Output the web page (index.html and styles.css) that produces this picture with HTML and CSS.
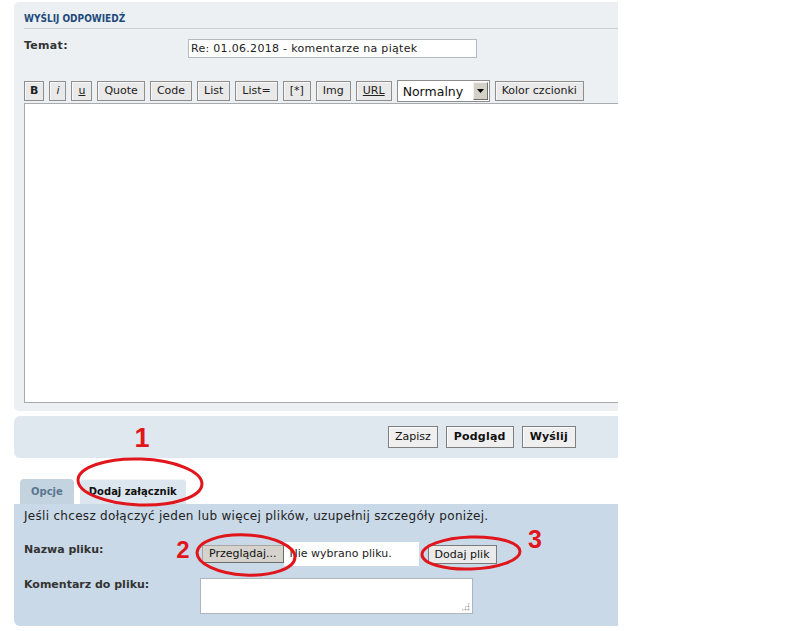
FILE: index.html
```html
<!DOCTYPE html>
<html lang="pl">
<head>
<meta charset="utf-8">
<title>Wyślij odpowiedź</title>
<link rel="stylesheet" href="styles.css">
</head>
<body>
<div class="page">
  <div class="main">
    <section class="panel post">
      <h3 class="post-title">WYŚLIJ ODPOWIEDŹ</h3>
      <div class="subject">
        <div class="subject-label">Temat:</div>
        <div class="subject-input">Re: 01.06.2018 - komentarze na piątek</div>
      </div>
      <div class="toolbar">
        <span class="tb-btn tb-b">B</span>
        <span class="tb-btn tb-i">i</span>
        <span class="tb-btn tb-u">u</span>
        <span class="tb-btn">Quote</span>
        <span class="tb-btn">Code</span>
        <span class="tb-btn">List</span>
        <span class="tb-btn">List=</span>
        <span class="tb-btn">[*]</span>
        <span class="tb-btn">Img</span>
        <span class="tb-btn tb-u">URL</span>
        <div class="select">
          <span class="select-text">Normalny</span>
          <span class="select-arrow"><svg width="7" height="4" viewBox="0 0 7 4"><path d="M0 0H7L3.5 4Z" fill="#000"/></svg></span>
        </div>
        <span class="tb-btn">Kolor czcionki</span>
      </div>
      <div class="editor"></div>
    </section>

    <div class="panel actions">
      <span class="btn">Zapisz</span>
      <span class="btn btn-strong">Podgląd</span>
      <span class="btn btn-strong">Wyślij</span>
    </div>

    <ul class="tabs">
      <li class="tab">Opcje</li>
      <li class="tab tab-active">Dodaj załącznik</li>
    </ul>

    <section class="panel attach">
      <p class="attach-intro">Jeśli chcesz dołączyć jeden lub więcej plików, uzupełnij szczegóły poniżej.</p>
      <div class="attach-row">
        <div class="attach-label">Nazwa pliku:</div>
        <div class="file">
          <span class="file-btn">Przeglądaj...</span>
          <span class="file-name">Nie wybrano pliku.</span>
        </div>
        <span class="add-btn">Dodaj plik</span>
      </div>
      <div class="attach-row attach-row-comment">
        <div class="attach-label">Komentarz do pliku:</div>
        <div class="comment"><span class="grip"></span></div>
      </div>
    </section>
  </div>

  <svg class="marks" width="800" height="631" viewBox="0 0 800 631">
    <g fill="none" stroke="#E1161C" stroke-width="3">
      <ellipse cx="140" cy="482" rx="62" ry="23" transform="rotate(2 140 482)"/>
      <ellipse cx="246" cy="555" rx="49" ry="20" transform="rotate(3 246 555)"/>
      <ellipse cx="471" cy="553" rx="49" ry="16" transform="rotate(-2 471 553)"/>
    </g>
    <g fill="#E1161C" font-family="'Liberation Sans', Arial, sans-serif" font-weight="bold" text-anchor="middle">
      <text x="142" y="447" font-size="27">1</text>
      <text x="183" y="558" font-size="24">2</text>
      <text x="535" y="548" font-size="25">3</text>
    </g>
  </svg>
</div>
</body>
</html>
```
FILE: styles.css
```css
html, body {
  margin: 0;
  background: #fff;
}
body {
  font-family: "DejaVu Sans", Verdana, sans-serif;
  font-size: 11px;
  color: #333;
}
.page {
  position: relative;
  width: 800px;
  height: 631px;
  box-sizing: border-box;
  padding: 2px 0 0 14px;
  overflow: hidden;
}
.main {
  width: 604px;
}

/* post panel */
.post {
  background: #ECF0F3;
  border-radius: 5px 0 0 5px;
  padding: 10px 0 8px 10px;
}
.post-title {
  margin: 0;
  font-family: "DejaVu Sans Condensed", "DejaVu Sans", sans-serif;
  font-weight: bold;
  font-size: 10px;
  line-height: 13px;
  color: #1F4B7C;
  padding-bottom: 3px;
  border-bottom: 1px solid #C8CED4;
}
.subject {
  display: flex;
  margin-top: 10px;
}
.subject-label {
  width: 164px;
  font-weight: bold;
  line-height: 13px;
  letter-spacing: 0.3px;
  color: #333;
}
.subject-input {
  width: 289px;
  height: 19px;
  box-sizing: border-box;
  border: 1px solid #B4BAC0;
  background: #fff;
  padding: 0 2px;
  line-height: 17px;
  letter-spacing: 0.3px;
  color: #222;
}
.toolbar {
  display: flex;
  align-items: center;
  gap: 5px;
  height: 22px;
  margin-top: 22px;
}
.tb-btn {
  height: 20px;
  box-sizing: border-box;
  padding: 0 6px;
  border: 1px solid #8E8E8E;
  background: #E9E9E9;
  box-shadow: inset 1px 1px 0 #F7F7F7;
  line-height: 18px;
  color: #222;
  white-space: nowrap;
}
.tb-b { font-weight: bold; padding: 0 5px; }
.tb-i { font-style: italic; }
.tb-u { text-decoration: underline; }
.select {
  width: 93px;
  height: 22px;
  box-sizing: border-box;
  border: 1px solid #8E8E8E;
  background: #fff;
  display: flex;
  align-items: center;
  justify-content: space-between;
  padding-left: 5px;
  font-size: 12.5px;
  color: #111;
}
.select-arrow {
  width: 15px;
  height: 18px;
  margin-right: 1px;
  box-sizing: border-box;
  background: #D4D0C8;
  border: 1px solid;
  border-color: #F4F2EE #6F6C66 #6F6C66 #F4F2EE;
  display: flex;
  align-items: center;
  justify-content: center;
}
.editor {
  margin-top: 1px;
  height: 300px;
  box-sizing: border-box;
  border: 1px solid #A8ABAE;
  border-right: 0;
  background: #fff;
}

/* actions */
.actions {
  margin-top: 5px;
  height: 42px;
  box-sizing: border-box;
  background: #DFE8EF;
  border-radius: 6px 0 0 6px;
  display: flex;
  justify-content: flex-end;
  align-items: center;
  gap: 8px;
  padding-right: 42px;
}
.btn {
  height: 22px;
  box-sizing: border-box;
  padding: 0 6px;
  border: 1px solid #7E7E7E;
  background: #EFEFEF;
  box-shadow: inset 1px 1px 0 #FAFAFA;
  line-height: 20px;
  color: #111;
}
.btn-strong {
  font-weight: bold;
  padding: 0 7px;
  letter-spacing: 0.2px;
}

/* tabs */
.tabs {
  display: flex;
  gap: 6px;
  list-style: none;
  margin: 21px 0 0;
  padding: 0 0 0 6px;
}
.tab {
  height: 25px;
  line-height: 25px;
  padding: 0 11px;
  border-radius: 4px 4px 0 0;
  background: #C4D3E0;
  color: #5A7691;
  font-weight: bold;
  font-size: 10px;
}
.tab-active {
  padding: 0 9px;
  background: #DCE6EE;
  box-shadow: inset 0 1px 0 #F1F5F8;
  color: #111;
}

/* attachments */
.attach {
  background: #C9D9E7;
  border-radius: 0 0 0 6px;
  padding: 6px 0 12px 10px;
}
.attach-intro {
  margin: 0;
  font-size: 12px;
  line-height: 13px;
  letter-spacing: 0.3px;
  color: #222;
}
.attach-row {
  display: flex;
  align-items: flex-start;
  margin-top: 19px;
}
.attach-row-comment {
  margin-top: 12px;
}
.attach-label {
  width: 176px;
  flex: none;
  font-weight: bold;
  line-height: 13px;
  padding-top: 1px;
  color: #333;
}
.attach-row-comment .attach-label {
  padding-top: 0;
}
.file {
  display: flex;
  align-items: center;
  height: 24px;
}
.file-btn {
  margin-left: 2px;
  height: 18px;
  box-sizing: border-box;
  padding: 0 6px;
  border: 1px solid;
  border-color: #A9A6A0 #6E6B66 #6E6B66 #A9A6A0;
  background: #D6D3CE;
  line-height: 16px;
  color: #111;
}
.file-name {
  width: 135px;
  height: 24px;
  box-sizing: border-box;
  background: #fff;
  padding-left: 6px;
  line-height: 24px;
  color: #222;
}
.add-btn {
  margin: 3px 0 0 9px;
  height: 19px;
  box-sizing: border-box;
  padding: 0 6px;
  border: 1px solid #7A7A7A;
  background: #EAEAEA;
  line-height: 17px;
  color: #111;
}
.comment {
  position: relative;
  width: 273px;
  height: 36px;
  box-sizing: border-box;
  border: 1px solid #AEB6BD;
  background: #fff;
}
.grip {
  position: absolute;
  right: 2px;
  bottom: 2px;
  width: 9px;
  height: 9px;
  background:
    radial-gradient(circle, #A5A5A5 0.9px, transparent 1.1px) 0 0 / 3px 3px;
  clip-path: polygon(100% 0, 100% 100%, 0 100%);
}

/* annotations */
.marks {
  position: absolute;
  left: 0;
  top: 0;
  pointer-events: none;
}
```
